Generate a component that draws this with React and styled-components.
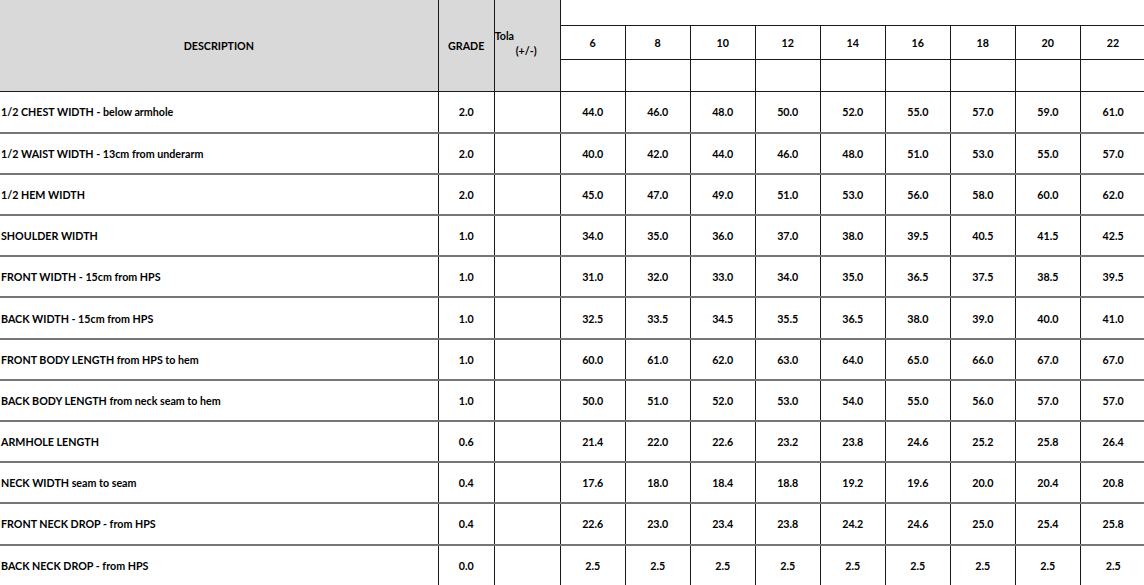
import React from "react";
import styled, { createGlobalStyle } from "styled-components";

const GlobalStyle = createGlobalStyle`
  html, body {
    margin: 0;
    padding: 0;
    background: #fff;
    overflow: hidden;
  }
`;

const SIZES = [6, 8, 10, 12, 14, 16, 18, 20, 22];

// measurement rows: description, grade, values per size
const ROWS = [
  ["1/2 CHEST WIDTH - below armhole", "2.0", ["44.0", "46.0", "48.0", "50.0", "52.0", "55.0", "57.0", "59.0", "61.0"]],
  ["1/2 WAIST WIDTH - 13cm from underarm", "2.0", ["40.0", "42.0", "44.0", "46.0", "48.0", "51.0", "53.0", "55.0", "57.0"]],
  ["1/2 HEM WIDTH", "2.0", ["45.0", "47.0", "49.0", "51.0", "53.0", "56.0", "58.0", "60.0", "62.0"]],
  ["SHOULDER WIDTH", "1.0", ["34.0", "35.0", "36.0", "37.0", "38.0", "39.5", "40.5", "41.5", "42.5"]],
  ["FRONT WIDTH - 15cm from HPS", "1.0", ["31.0", "32.0", "33.0", "34.0", "35.0", "36.5", "37.5", "38.5", "39.5"]],
  ["BACK WIDTH - 15cm from HPS", "1.0", ["32.5", "33.5", "34.5", "35.5", "36.5", "38.0", "39.0", "40.0", "41.0"]],
  ["FRONT BODY LENGTH from HPS to hem", "1.0", ["60.0", "61.0", "62.0", "63.0", "64.0", "65.0", "66.0", "67.0", "67.0"]],
  ["BACK BODY LENGTH from neck seam to hem", "1.0", ["50.0", "51.0", "52.0", "53.0", "54.0", "55.0", "56.0", "57.0", "57.0"]],
  ["ARMHOLE LENGTH", "0.6", ["21.4", "22.0", "22.6", "23.2", "23.8", "24.6", "25.2", "25.8", "26.4"]],
  ["NECK WIDTH seam to seam", "0.4", ["17.6", "18.0", "18.4", "18.8", "19.2", "19.6", "20.0", "20.4", "20.8"]],
  ["FRONT NECK DROP - from HPS", "0.4", ["22.6", "23.0", "23.4", "23.8", "24.2", "24.6", "25.0", "25.4", "25.8"]],
  ["BACK NECK DROP - from HPS", "0.0", ["2.5", "2.5", "2.5", "2.5", "2.5", "2.5", "2.5", "2.5", "2.5"]],
];

const Sheet = styled.table`
  border-collapse: collapse;
  table-layout: fixed;
  width: 1146px;
  font-family: Lato, "Liberation Sans", sans-serif;
  font-size: 10.7px;
  font-weight: 700;
  color: #000;
`;

const Col = styled.col`
  width: ${(p) => p.$w}px;
`;

const HeadCell = styled.th`
  background: #d9d9d9;
  border-right: 1.5px solid #1a1a1a;
  border-bottom: 1.5px solid #1a1a1a;
  font-weight: 700;
  padding: 0;
  text-align: ${(p) => (p.$left ? "left" : "center")};
  vertical-align: ${(p) => (p.$left ? "top" : "middle")};
`;

const TolaLabel = styled.div`
  padding-top: 28px;
  line-height: 15px;
  font-weight: 700;
`;

const TolaSub = styled.div`
  padding-left: 21px;
`;

const BlankTop = styled.td`
  height: 25px;
  padding: 0;
  border-bottom: 1.5px solid #1a1a1a;
`;

const SizeCell = styled.td`
  height: ${(p) => p.$h}px;
  padding: 0;
  text-align: center;
  border-right: 1.5px solid #1a1a1a;
  border-bottom: 1.5px solid #1a1a1a;
`;

const Row = styled.tr`
  height: 41.2px;
  border-bottom: 2px solid #767676;
`;

const DescCell = styled.td`
  padding: 0 0 0 1px;
  white-space: nowrap;
  overflow: hidden;
`;

const ValueCell = styled.td`
  padding: 0;
  text-align: center;
  border-left: 1.5px solid #1a1a1a;
`;

export default function App() {
  return (
    <>
      <GlobalStyle />
      <Sheet>
        <colgroup>
          <Col $w={438} />
          <Col $w={56} />
          <Col $w={66} />
          {SIZES.map((s) => (
            <Col key={s} $w={65} />
          ))}
        </colgroup>
        <thead>
          <tr>
            <HeadCell rowSpan={3}>DESCRIPTION</HeadCell>
            <HeadCell rowSpan={3}>GRADE</HeadCell>
            <HeadCell rowSpan={3} $left>
              <TolaLabel>
                Tola
                <TolaSub>(+/-)</TolaSub>
              </TolaLabel>
            </HeadCell>
            <BlankTop colSpan={SIZES.length} />
          </tr>
          <tr>
            {SIZES.map((s) => (
              <SizeCell key={s} $h={33}>
                {s}
              </SizeCell>
            ))}
          </tr>
          <tr>
            {SIZES.map((s) => (
              <SizeCell key={s} $h={31} />
            ))}
          </tr>
        </thead>
        <tbody>
          {ROWS.map(([desc, grade, values]) => (
            <Row key={desc}>
              <DescCell>{desc}</DescCell>
              <ValueCell>{grade}</ValueCell>
              <ValueCell />
              {values.map((v, i) => (
                <ValueCell key={i}>{v}</ValueCell>
              ))}
            </Row>
          ))}
        </tbody>
      </Sheet>
    </>
  );
}
